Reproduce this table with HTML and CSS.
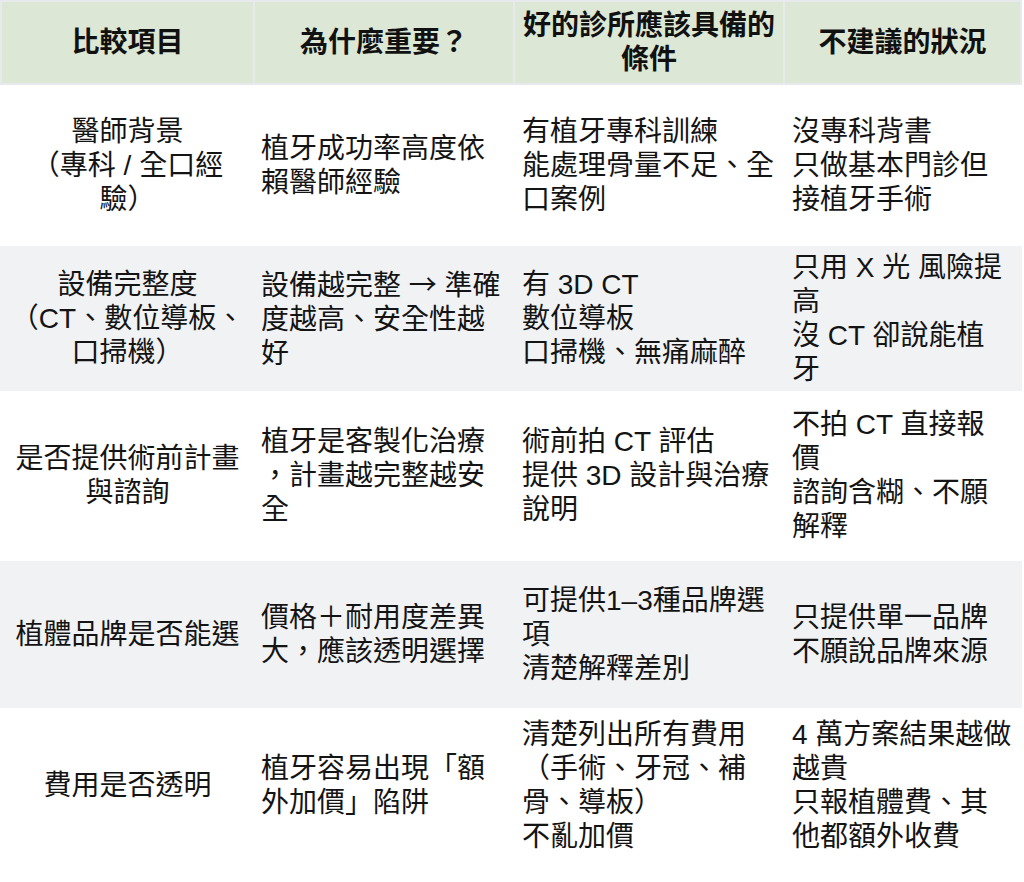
FILE: index.html
```html
<!DOCTYPE html>
<html lang="zh-Hant">
<head>
<meta charset="utf-8">
<title>植牙診所比較</title>
<link rel="stylesheet" href="styles.css">
</head>
<body>
<div class="table">
  <div class="row head">
    <div class="cell">比較項目</div>
    <div class="cell">為什麼重要？</div>
    <div class="cell">好的診所應該具備的<br>條件</div>
    <div class="cell">不建議的狀況</div>
  </div>
  <div class="row r1">
    <div class="cell c1">醫師背景<br>（專科 / 全口經<br>驗）</div>
    <div class="cell c2">植牙成功率高度依<br>賴醫師經驗</div>
    <div class="cell c3">有植牙專科訓練<br>能處理骨量不足、全<br>口案例</div>
    <div class="cell c4">沒專科背書<br>只做基本門診但<br>接植牙手術</div>
  </div>
  <div class="row r2 alt">
    <div class="cell c1">設備完整度<br>（CT、數位導板、<br>口掃機）</div>
    <div class="cell c2">設備越完整 <span class="arrow">→</span> 準確<br>度越高、安全性越<br>好</div>
    <div class="cell c3">有 3D CT<br>數位導板<br>口掃機、無痛麻醉</div>
    <div class="cell c4">只用 X 光 風險提<br>高<br>沒 CT 卻說能植<br>牙</div>
  </div>
  <div class="row r3">
    <div class="cell c1">是否提供術前計畫<br>與諮詢</div>
    <div class="cell c2">植牙是客製化治療<br>，計畫越完整越安<br>全</div>
    <div class="cell c3">術前拍 CT 評估<br>提供 3D 設計與治療<br>說明</div>
    <div class="cell c4">不拍 CT 直接報<br>價<br>諮詢含糊、不願<br>解釋</div>
  </div>
  <div class="row r4 alt">
    <div class="cell c1">植體品牌是否能選</div>
    <div class="cell c2">價格＋耐用度差異<br>大，應該透明選擇</div>
    <div class="cell c3">可提供1–3種品牌選<br>項<br>清楚解釋差別</div>
    <div class="cell c4">只提供單一品牌<br>不願說品牌來源</div>
  </div>
  <div class="row r5">
    <div class="cell c1">費用是否透明</div>
    <div class="cell c2">植牙容易出現「額<br>外加價」陷阱</div>
    <div class="cell c3">清楚列出所有費用<br>（手術、牙冠、補<br>骨、導板）<br>不亂加價</div>
    <div class="cell c4">4 萬方案結果越做<br>越貴<br>只報植體費、其<br>他都額外收費</div>
  </div>
</div>
</body>
</html>
```

FILE: styles.css
```css
html, body {
  margin: 0;
  padding: 0;
  background: #ffffff;
}

body {
  font-family: "Liberation Sans", "Noto Sans CJK TC", sans-serif;
  font-size: 28px;
  line-height: 34px;
  color: #141414;
}

.table {
  width: 1022px;
}

.row {
  display: grid;
  grid-template-columns: 251px 258px 268px 235px;
  column-gap: 2px;
  padding: 0 2px;
}

.cell {
  display: flex;
  align-items: center;
  white-space: nowrap;
  padding: 0 6px;
}

.cell > .arrow {
  display: contents;
}

.arrow {
  font-family: "Noto Sans CJK TC", sans-serif;
}

.head {
  background: #e6eaed;
  padding: 2px;
}

.head .cell {
  background: #dce8d5;
  height: 81px;
  justify-content: center;
  text-align: center;
  font-weight: bold;
  color: #111111;
  padding: 0;
}

.alt {
  background: #f1f2f4;
}

.c1 {
  justify-content: center;
  text-align: center;
  padding: 0;
}

.c3, .c4 {
  padding-left: 7px;
}

.r1 { height: 161px; }
.r2 { height: 145px; }
.r3 { height: 170px; }
.r4 { height: 147px; }
.r5 { height: 156px; }
```
